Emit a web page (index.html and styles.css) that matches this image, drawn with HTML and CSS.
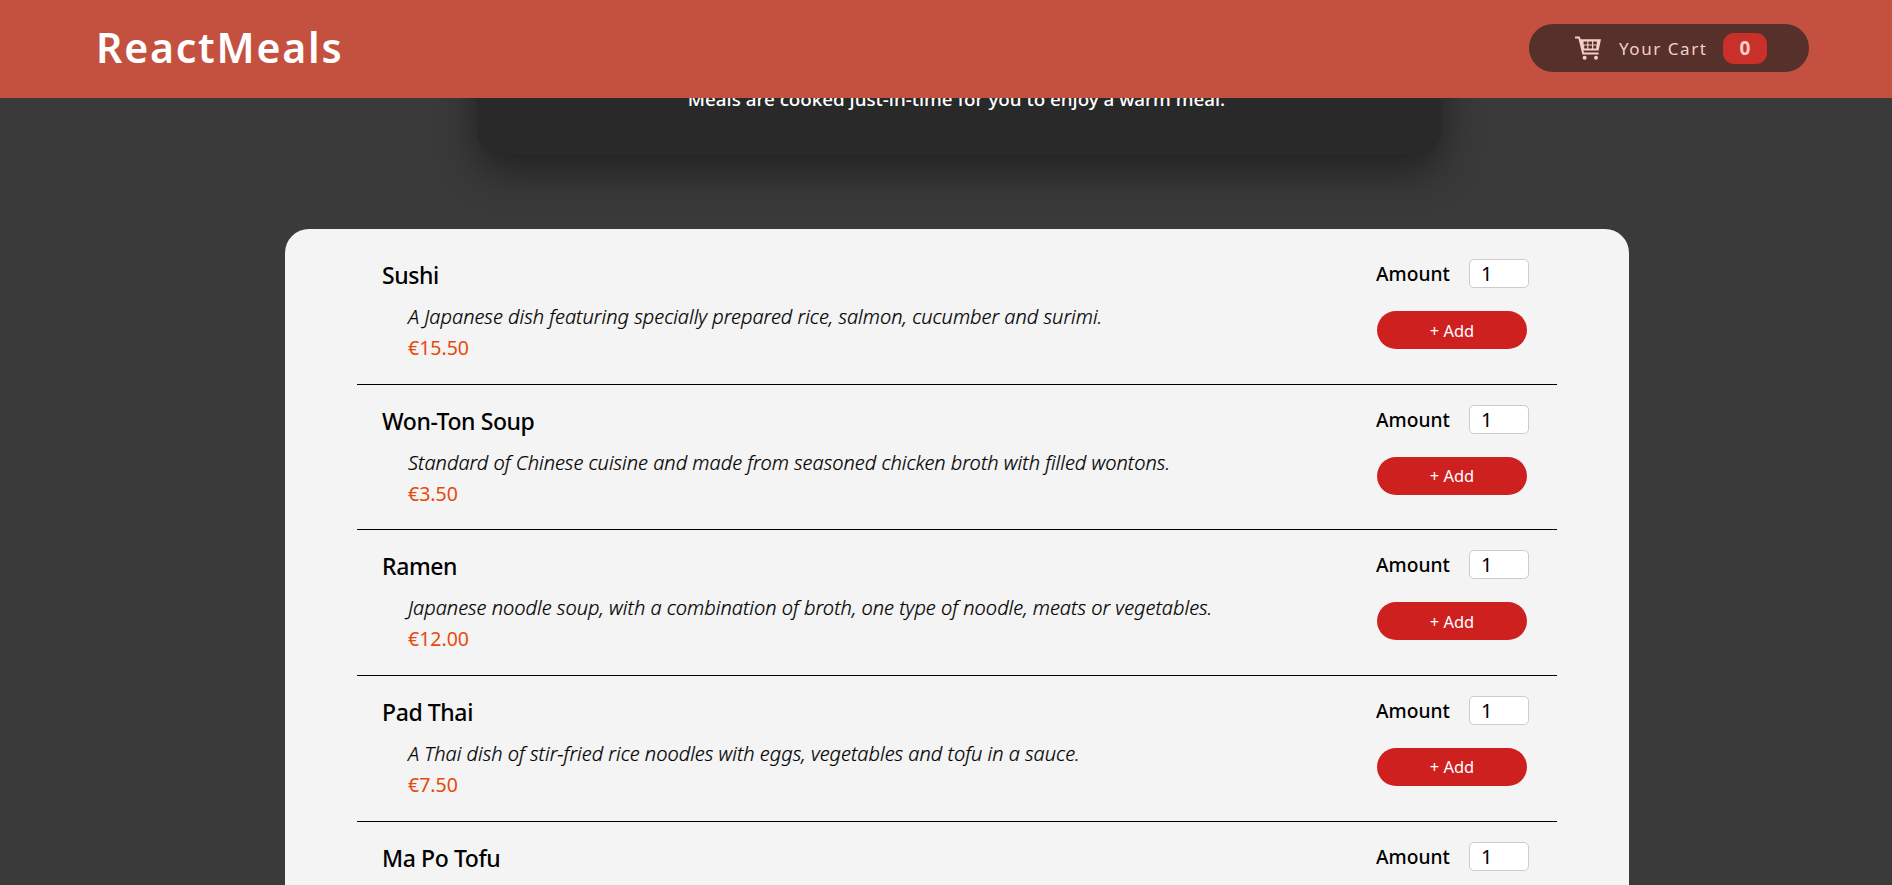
FILE: index.html
```html
<!DOCTYPE html>
<html lang="en">
<head>
<meta charset="utf-8">
<title>ReactMeals</title>
<link rel="stylesheet" href="styles.css">
</head>
<body>
<header class="topbar">
  <h1 class="brand">ReactMeals</h1>
  <button class="cart-btn" type="button">
    <svg class="cart-icon" viewBox="0 0 26 24" aria-hidden="true">
      <path d="M0 .6h4.6l1.1 2.6H26l-2.4 11.2H8.3l.7 2h14.6v2H7.4L3.4 2.6H0z" fill="currentColor"/>
      <path d="M8.6 5.4h3.6v3H8.6zM13.4 5.4h3.6v3h-3.6zM18.2 5.4h3.6v3h-3.6zM9.2 9.6h3v2.8h-3zM13.4 9.6h3.6v2.8h-3.6zM18.2 9.6h3.1v2.8h-3.1z" fill="#56302a"/>
      <circle cx="9.6" cy="21.8" r="2" fill="currentColor"/>
      <circle cx="21" cy="21.8" r="2" fill="currentColor"/>
    </svg>
    <span class="cart-label">Your Cart</span>
    <span class="cart-badge">0</span>
  </button>
</header>
<main class="page">
  <section class="summary">
    <p>Meals are cooked just-in-time for you to enjoy a warm meal.</p>
  </section>
  <section class="menu">
    <ul class="meal-list">
      <li class="meal">
        <div class="meal-info">
          <h3 class="meal-name">Sushi</h3>
          <div class="meal-desc">A Japanese dish featuring specially prepared rice, salmon, cucumber and surimi.</div>
          <div class="meal-price">€15.50</div>
        </div>
        <form class="meal-form">
          <div class="amount"><label class="amount-label">Amount</label><input class="amount-input" type="number" value="1"></div>
          <button class="add-btn" type="button">+ Add</button>
        </form>
      </li>
      <li class="meal">
        <div class="meal-info">
          <h3 class="meal-name">Won-Ton Soup</h3>
          <div class="meal-desc">Standard of Chinese cuisine and made from seasoned chicken broth with filled wontons.</div>
          <div class="meal-price">€3.50</div>
        </div>
        <form class="meal-form">
          <div class="amount"><label class="amount-label">Amount</label><input class="amount-input" type="number" value="1"></div>
          <button class="add-btn" type="button">+ Add</button>
        </form>
      </li>
      <li class="meal">
        <div class="meal-info">
          <h3 class="meal-name">Ramen</h3>
          <div class="meal-desc">Japanese noodle soup, with a combination of broth, one type of noodle, meats or vegetables.</div>
          <div class="meal-price">€12.00</div>
        </div>
        <form class="meal-form">
          <div class="amount"><label class="amount-label">Amount</label><input class="amount-input" type="number" value="1"></div>
          <button class="add-btn" type="button">+ Add</button>
        </form>
      </li>
      <li class="meal">
        <div class="meal-info">
          <h3 class="meal-name">Pad Thai</h3>
          <div class="meal-desc">A Thai dish of stir-fried rice noodles with eggs, vegetables and tofu in a sauce.</div>
          <div class="meal-price">€7.50</div>
        </div>
        <form class="meal-form">
          <div class="amount"><label class="amount-label">Amount</label><input class="amount-input" type="number" value="1"></div>
          <button class="add-btn" type="button">+ Add</button>
        </form>
      </li>
      <li class="meal">
        <div class="meal-info">
          <h3 class="meal-name">Ma Po Tofu</h3>
        </div>
        <form class="meal-form">
          <div class="amount"><label class="amount-label">Amount</label><input class="amount-input" type="number" value="1"></div>
        </form>
      </li>
    </ul>
  </section>
</main>
</body>
</html>
```
FILE: styles.css
```css
* { box-sizing: border-box; }
html, body { margin: 0; height: 100%; overflow: hidden; }
body {
  background: #3a3a3a;
  font-family: "Noto Sans", sans-serif;
  color: #000;
}
.topbar {
  position: fixed;
  top: 0; left: 0; right: 0;
  height: 98px;
  z-index: 10;
  background: #c4513f;
  display: flex;
  align-items: center;
  justify-content: space-between;
  padding: 0 83px 2px 96px;
}
.brand {
  margin: 0 0 3px;
  color: #fff;
  font-size: 41px;
  font-weight: 600;
  line-height: 48px;
  letter-spacing: 1.8px;
}
.cart-btn {
  width: 280px;
  height: 48px;
  border: 0;
  border-radius: 25px;
  background: #56302a;
  color: #f5cfc6;
  font: inherit;
  display: flex;
  align-items: center;
  padding: 0 0 0 46px;
}
.cart-icon { width: 26px; height: 24px; margin-right: 18px; flex: none; }
.cart-label { font-size: 17px; letter-spacing: 1.55px; width: 104px; text-align: left; }
.cart-badge {
  width: 44px;
  height: 31px;
  border-radius: 11px;
  background: #c9302a;
  color: #f8d0c8;
  font-size: 19px;
  font-weight: 700;
  line-height: 31px;
  text-align: center;
}
.page { padding-top: 1px; }
.summary {
  width: 964px;
  height: 154px;
  margin: 0 0 74px 477px;
  background: #292929;
  border-radius: 24px;
  box-shadow: 0 16px 44px rgba(0, 0, 0, 0.45);
  color: #fff;
  text-align: center;
  display: flex;
  align-items: flex-end;
  justify-content: center;
  padding: 0 5px 43px 0;
}
.summary p { margin: 0; font-size: 18.8px; font-weight: 500; }
.menu {
  width: 1344px;
  margin-left: 285px;
  padding: 10px 72px 0;
  background: #f4f4f4;
  border-radius: 24px;
}
.meal-list { margin: 0; padding: 0; list-style: none; }
.meal {
  display: flex;
  justify-content: space-between;
  height: 145.67px;
  padding: 22px 0 0 25px;
  border-bottom: 1px solid #000;
}
.meal-name { margin: 0 0 14px; font-size: 23px; font-weight: 500; line-height: 28px; letter-spacing: -0.4px; }
.meal-desc { margin-left: 26px; font-size: 20px; font-style: italic; font-weight: 300; line-height: 28px; color: #000; -webkit-text-stroke: 0.2px #000; }
.meal-price { margin: 4px 0 0 26px; font-size: 19.5px; color: #e64a0c; line-height: 26px; }
.meal-form { width: 153px; margin-right: 28px; display: flex; flex-direction: column; align-items: flex-end; }
.amount { display: flex; align-items: center; width: 100%; justify-content: space-between; margin-top: -2px; }
.amount-label { font-size: 19.2px; font-weight: 500; }
.amount-input {
  width: 60px;
  height: 29px;
  padding: 0 0 0 11px;
  border: 1px solid #ccc;
  border-radius: 5px;
  background: #fff;
  font: 20px "Noto Sans", sans-serif;
}
.add-btn {
  width: 150px;
  height: 38px;
  margin: 23px 2px 0 0;
  border: 0;
  border-radius: 20px;
  background: #cf2020;
  color: #fff;
  font: 16.5px "Noto Sans", sans-serif;
}
```
